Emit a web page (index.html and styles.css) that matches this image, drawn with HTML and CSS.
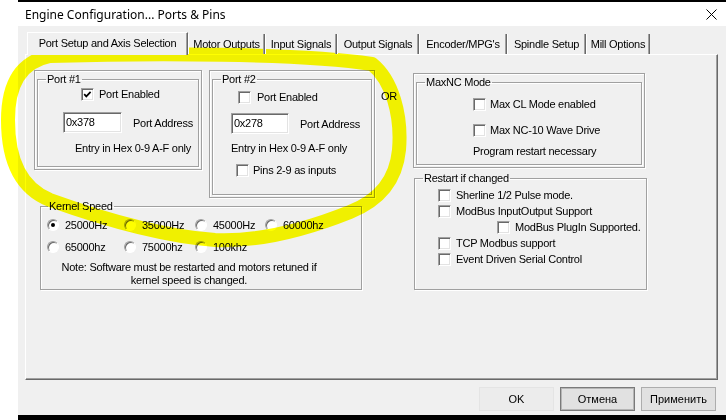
FILE: index.html
```html
<!DOCTYPE html>
<html lang="en">
<head>
    <meta charset="UTF-8">
    <title>Engine Configuration... Ports &amp; Pins</title>
    <link rel="stylesheet" href="styles.css">
</head>
<body>
    <div class="window">
        <div class="titlebar">
            <span class="title">Engine Configuration... Ports &amp; Pins</span>
            <svg class="close" width="11" height="11" viewBox="0 0 11 11">
                <path d="M0.5 0.5 L10.5 10.5 M10.5 0.5 L0.5 10.5" stroke="#000" stroke-width="1" fill="none"/>
            </svg>
        </div>

        <div class="tabs">
            <div class="tab active w1">Port Setup and Axis Selection</div>
            <div class="tab w2">Motor Outputs</div>
            <div class="tab w3">Input Signals</div>
            <div class="tab w4">Output Signals</div>
            <div class="tab w5">Encoder/MPG's</div>
            <div class="tab w6">Spindle Setup</div>
            <div class="tab w7">Mill Options</div>
        </div>

        <div class="panel">
            <div class="left-col">
                <div class="ports">
                    <div class="frame port1">
                        <fieldset>
                            <legend>Port #1</legend>
                            <div class="row p1-r1"><span class="cb"><svg width="11" height="11" viewBox="0 0 11 11"><path d="M2.2 5.2 L4.3 7.4 L8.6 2.9" stroke="#000" stroke-width="1.7" fill="none"/></svg></span><span class="lbl">Port Enabled</span></div>
                            <div class="row p1-r2"><input class="hex" type="text" value="0x378"><span class="addr">Port Address</span></div>
                            <div class="row p1-r3">Entry in Hex 0-9 A-F only</div>
                        </fieldset>
                    </div>
                    <div class="frame port2">
                        <fieldset>
                            <legend>Port #2</legend>
                            <div class="row p2-r1"><span class="cb"></span><span class="lbl">Port Enabled</span></div>
                            <div class="row p2-r2"><input class="hex hex2" type="text" value="0x278"><span class="addr">Port Address</span></div>
                            <div class="row p2-r3">Entry in Hex 0-9 A-F only</div>
                            <div class="row p2-r4"><span class="cb"></span><span class="lbl">Pins 2-9 as inputs</span></div>
                        </fieldset>
                    </div>
                </div>

                <fieldset class="kernel">
                    <legend>Kernel Speed</legend>
                    <div class="radios">
                        <div class="radio"><span class="rb on"></span>25000Hz</div>
                        <div class="radio"><span class="rb"></span>35000Hz</div>
                        <div class="radio"><span class="rb"></span>45000Hz</div>
                        <div class="radio"><span class="rb"></span>60000hz</div>
                        <div class="radio"><span class="rb"></span>65000hz</div>
                        <div class="radio"><span class="rb"></span>75000hz</div>
                        <div class="radio"><span class="rb"></span>100khz</div>
                    </div>
                    <div class="note">Note: Software must be restarted and motors retuned if<br>kernel speed is changed.</div>
                </fieldset>
            </div>

            <div class="or">OR</div>

            <div class="right-col">
                <div class="frame maxnc">
                    <fieldset>
                        <legend>MaxNC Mode</legend>
                        <div class="row m-r1"><span class="cb"></span><span class="lbl lbl-tight">Max CL Mode enabled</span></div>
                        <div class="row m-r2"><span class="cb"></span><span class="lbl lbl-tight">Max NC-10 Wave Drive</span></div>
                        <div class="row m-r3">Program restart necessary</div>
                    </fieldset>
                </div>

                <fieldset class="restart">
                    <legend>Restart if changed</legend>
                    <div class="row r-row"><span class="cb"></span><span class="lbl">Sherline 1/2 Pulse mode.</span></div>
                    <div class="row r-row"><span class="cb"></span><span class="lbl">ModBus InputOutput Support</span></div>
                    <div class="row r-row r-sub"><span class="cb"></span><span class="lbl">ModBus PlugIn Supported.</span></div>
                    <div class="row r-row"><span class="cb"></span><span class="lbl">TCP Modbus support</span></div>
                    <div class="row r-row"><span class="cb"></span><span class="lbl">Event Driven Serial Control</span></div>
                </fieldset>
            </div>
        </div>

        <div class="buttons">
            <button class="btn btn-ok">OK</button>
            <button class="btn btn-focus">Отмена</button>
            <button class="btn">Применить</button>
        </div>
    </div>

    <!-- marker scribble drawn over the screenshot -->
    <svg class="marker" width="726" height="420" viewBox="0 0 726 420">
        <path d="M50 56 C150 53, 300 53, 372 64 C392 80, 402 115, 399 150 C396 180, 380 200, 350 212 C310 228, 260 242, 215 240 C160 236, 100 218, 50 200 C20 188, 8 160, 8 120 C8 85, 20 62, 50 56" stroke="#ffff00" stroke-width="14" stroke-linecap="round" stroke-linejoin="round" fill="none"/>
    </svg>
</body>
</html>
```

FILE: styles.css
```css
body {
    margin: 0;
    width: 726px;
    height: 420px;
    overflow: hidden;
    position: relative;
    background: #fff;
    font-family: "Liberation Sans", Arial, sans-serif;
    font-size: 11px;
    letter-spacing: -0.25px;
    color: #000;
}
.window {
    margin-left: 18px;
    width: 708px;
    height: 420px;
    box-sizing: border-box;
    border-top: 2px solid #000;
    border-bottom: 5px solid #000;
    background: #f0f0f0;
}
.titlebar {
    height: 24px;
    background: #fff;
    display: flex;
    align-items: center;
    position: relative;
}
.title {
    padding-left: 7px;
    font-family: "Noto Sans", "Open Sans", sans-serif;
    font-size: 12px;
    letter-spacing: 0;
}
.close {
    position: absolute;
    left: 688px;
    top: 7px;
}

/* Tabs */
.tabs {
    display: flex;
    align-items: flex-end;
    height: 22px;
    margin: 6px 0 0 9px;
    position: relative;
    z-index: 1;
}
.tab {
    height: 20px;
    line-height: 20px;
    text-align: center;
    box-sizing: border-box;
    border-left: 1px solid #fff;
    border-right: 1px solid #696969;
    box-shadow: inset -1px 0 #a0a0a0;
    white-space: nowrap;
    padding-top: 1px;
    line-height: 18px;
}
.tab.active {
    height: 23px;
    margin-bottom: -1px;
    border-top: 1px solid #fff;
    background: #f0f0f0;
    line-height: 20px;
    padding-top: 0;
}
.w1 { width: 161px; }
.w2 { width: 77px; }
.w3 { width: 72px; }
.w4 { width: 82px; }
.w5 { width: 88px; }
.w6 { width: 79px; }
.w7 { width: 64px; }

/* Tab page */
.panel {
    margin-left: 7px;
    width: 693px;
    height: 326px;
    box-sizing: border-box;
    border: 1px solid;
    border-color: #fff #696969 #696969 #fff;
    box-shadow: inset -1px -1px #a0a0a0;
    display: flex;
    align-items: flex-start;
}
.left-col {
    width: 341px;
    margin-left: 8px;
    padding-top: 15px;
}
.ports {
    display: flex;
    align-items: flex-start;
    gap: 7px;
}
.or {
    width: 32px;
    padding-left: 6px;
    margin-top: 35px;
}
.right-col {
    width: 234px;
    padding-top: 18px;
}

/* Sunken frame round a group */
.frame {
    box-sizing: border-box;
    border: 1px solid #a0a0a0;
    box-shadow: 1px 1px 0 #fff, inset 1px 1px 0 #fff;
    padding: 2px;
}
.port1 { width: 168px; }
.port2 { width: 166px; }
.maxnc { width: 232px; }

fieldset {
    margin: 0;
    padding: 0;
    border: 1px solid #a0a0a0;
    box-shadow: inset 1px 1px 0 #fff, 1px 1px 0 #fff;
    min-width: 0;
}
legend {
    margin-left: 8px;
    padding: 0 1px;
    line-height: 13px;
}
.row {
    display: flex;
    align-items: center;
    height: 14px;
    white-space: nowrap;
}
.lbl { margin-left: 5px; }
.lbl-tight { margin-left: 4px; }

/* Port #1 */
.port1 fieldset { padding-bottom: 11px; }
.p1-r1 { margin-top: 1px; padding-left: 43px; }
.p1-r2 { margin-top: 11px; padding-left: 25px; height: 21px; }
.p1-r3 { margin-top: 8px; padding-left: 37px; }

/* Port #2 */
.port2 fieldset { padding-bottom: 17px; }
.p2-r1 { margin-top: 4px; padding-left: 25px; }
.p2-r1 .lbl { margin-left: 6px; }
.p2-r2 { margin-top: 9px; padding-left: 18px; height: 21px; }
.p2-r3 { margin-top: 7px; padding-left: 18px; }
.p2-r4 { margin-top: 8px; padding-left: 23px; }
.p2-r4 .lbl { margin-left: 4px; }

.hex {
    width: 59px;
    height: 21px;
    box-sizing: border-box;
    margin: 0;
    padding: 0 0 2px 2px;
    border: 1px solid;
    border-color: #a0a0a0 #fff #fff #a0a0a0;
    box-shadow: inset 1px 1px #696969, inset -1px -1px #e3e3e3;
    background: #fff;
    font: inherit;
    letter-spacing: inherit;
    outline: none;
}
.hex2 { width: 58px; }
.addr { margin-left: 11px; }

/* Checkbox and radio */
.cb {
    display: inline-block;
    width: 13px;
    height: 13px;
    box-sizing: border-box;
    border: 1px solid;
    border-color: #a0a0a0 #fff #fff #a0a0a0;
    box-shadow: inset 1px 1px #696969, inset -1px -1px #e3e3e3;
    background: #fff;
    flex: none;
}
.cb svg { display: block; }
.rb {
    display: inline-block;
    width: 12px;
    height: 12px;
    box-sizing: border-box;
    border-radius: 50%;
    border: 1px solid;
    border-color: #a0a0a0 #fff #fff #a0a0a0;
    box-shadow: inset 1px 1px #696969;
    background: #fff;
    position: relative;
    margin-right: 6px;
    flex: none;
}
.rb.on::after {
    content: "";
    position: absolute;
    left: 3px;
    top: 3px;
    width: 4px;
    height: 4px;
    border-radius: 50%;
    background: #000;
}

/* Kernel speed */
.kernel {
    width: 322px;
    box-sizing: border-box;
    margin: 2px 0 0 6px;
    padding-bottom: 2px;
}
.kernel legend { margin-left: 7px; }
.radios {
    display: grid;
    grid-template-columns: 77px 71px 70px auto;
    row-gap: 8px;
    margin-top: 5px;
    padding-left: 6px;
}
.radio {
    display: flex;
    align-items: center;
    height: 14px;
}
.note {
    margin-top: 7px;
    margin-right: 24px;
    text-align: center;
    line-height: 13px;
}

/* MaxNC */
.maxnc fieldset { padding-bottom: 6px; }
.m-r1 { margin-top: 8px; padding-left: 56px; }
.m-r2 { margin-top: 12px; padding-left: 56px; }
.m-r3 { margin-top: 7px; padding-left: 56px; }

/* Restart */
.restart {
    width: 233px;
    box-sizing: border-box;
    margin: 4px 0 0 1px;
    padding-bottom: 22px;
}
.restart legend { margin-left: 8px; }
.r-row { height: 16px; padding-left: 23px; }
.r-row:first-of-type { margin-top: 2px; }
.r-sub { padding-left: 82px; }

/* Dialog buttons */
.buttons {
    display: flex;
    justify-content: flex-end;
    gap: 6px;
    margin-top: 7px;
    padding-right: 10px;
}
.btn {
    width: 75px;
    height: 24px;
    margin: 0;
    padding: 0;
    background: #e1e1e1;
    border: 1px solid #adadad;
    font: inherit;
    letter-spacing: 0;
    color: #000;
}
.btn-ok {
    background: #ececec;
    border-color: #e4e4e4;
}
.btn-focus {
    border-color: #7a7a7a;
    box-shadow: inset 0 0 0 1px #b5b5b5;
}

.marker {
    position: absolute;
    left: 0;
    top: 0;
    pointer-events: none;
    mix-blend-mode: multiply;
}
```
